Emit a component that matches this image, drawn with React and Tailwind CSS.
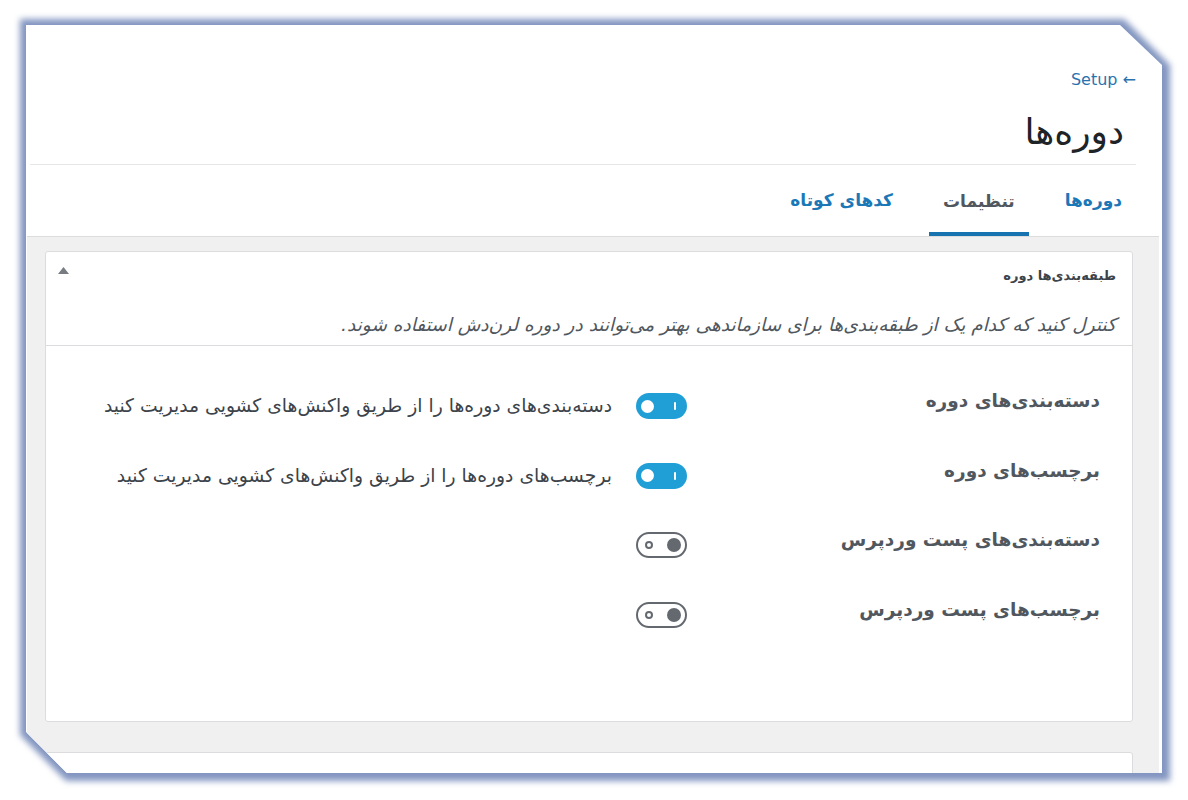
export default function App() {
  const rows = [
    {
      label: 'دسته‌بندی‌های دوره',
      on: true,
      text: 'دسته‌بندی‌های دوره‌ها را از طریق واکنش‌های کشویی مدیریت کنید',
    },
    {
      label: 'برچسب‌های دوره',
      on: true,
      text: 'برچسب‌های دوره‌ها را از طریق واکنش‌های کشویی مدیریت کنید',
    },
    { label: 'دسته‌بندی‌های پست وردپرس', on: false },
    { label: 'برچسب‌های پست وردپرس', on: false },
  ];

  return (
    <div
      dir="rtl"
      className="w-[1188px] h-[800px] bg-white pt-[25px] pl-[26px] pr-[26px] pb-[27px] overflow-hidden font-['DejaVu_Sans',sans-serif]"
    >
      {/* framed screenshot card */}
      <div className="relative h-full">
        {/* soft blue frame shadow */}
        <div className="absolute -top-[6px] -bottom-[8px] -left-[6px] -right-[8px] blur-[3px]">
          <div className="w-full h-full bg-[#8396c1] [clip-path:polygon(0_0,calc(100%-46px)_0,100%_46px,100%_100%,46px_100%,0_calc(100%-46px))]" />
        </div>
        <div className="relative h-full bg-white overflow-hidden flex flex-col [clip-path:polygon(0_0,calc(100%-42px)_0,100%_40px,100%_100%,41px_100%,0_calc(100%-41px))]">
          {/* page header */}
          <div className="ml-[4px] mr-[26px] border-b border-[#e4e6e8] pt-[44px] pb-[12px]">
            <div className="text-right leading-[22px]">
              <span dir="ltr" className="text-[16px] leading-[22px] text-[#2a72ad]">
                Setup ←
              </span>
            </div>
            <h1 className="mt-[21px] mr-[12px] text-[36px] leading-[40px] text-[#1d2327] font-normal">
              دوره‌ها
            </h1>
          </div>

          {/* tabs */}
          <div className="ml-[1px] mr-[3px] border-b border-[#dcdcde] flex pr-[23px] gap-[22px]">
            <div className="px-[14px] h-[71px] flex items-center text-[17px] font-bold text-[#1b78b7]">
              دوره‌ها
            </div>
            <div className="px-[14px] h-[71px] pt-[7px] flex items-center text-[17px] font-bold text-[#50575e] border-b-4 border-[#1772b0]">
              تنظیمات
            </div>
            <div className="px-[14px] h-[71px] flex items-center text-[17px] font-bold text-[#1b78b7]">
              کدهای کوتاه
            </div>
          </div>

          {/* gray content area */}
          <div className="flex-1 ml-[1px] mr-[3px] bg-[#f0f0f1] pt-[14px] pr-[26px] pl-[18px]">
            <div className="bg-white border border-[#dcdcde] rounded-[3px] h-[471px]">
              <div className="border-b border-[#dcdcde] pr-[16px] pl-[12px] pt-[14px] pb-[8px]">
                <div className="flex justify-between items-start">
                  <h2 className="text-[13px] leading-[20px] font-bold text-[#3c434a]">
                    طبقه‌بندی‌ها دوره
                  </h2>
                  <svg width="11" height="7" viewBox="0 0 11 7" className="mt-[1px]">
                    <path d="M5.5 0 L11 7 L0 7 Z" fill="#787c82" />
                  </svg>
                </div>
                <p className="mt-[27px] text-[18.5px] leading-[24px] italic text-[#50575e]">
                  کنترل کنید که کدام یک از طبقه‌بندی‌ها برای سازماندهی بهتر می‌توانند در دوره لرن‌دش استفاده شوند.
                </p>
              </div>

              <div className="pt-[43px] pr-[32px]">
                {rows.map((r) => (
                  <div key={r.label} className="flex items-start h-[69.5px]">
                    <div className="w-[413px] text-[18.5px] leading-[24px] font-bold text-[#50575e]">
                      {r.label}
                    </div>
                    <div className="flex items-center gap-[24px] mt-[4px]">
                      {r.on ? (
                        <div className="relative w-[51px] h-[26px] rounded-full bg-[#1f9fd6] shrink-0">
                          <span className="absolute left-[5px] top-[6.5px] w-[13px] h-[13px] rounded-full bg-white" />
                          <span className="absolute left-[38px] top-[9px] w-[2px] h-[8px] rounded-[1px] bg-white" />
                        </div>
                      ) : (
                        <div className="relative w-[51px] h-[26px] rounded-full border-2 border-[#646970] bg-white shrink-0">
                          <span className="absolute left-[29px] top-[4px] w-[14px] h-[14px] rounded-full bg-[#646970]" />
                          <span className="absolute left-[7px] top-[7px] w-[8px] h-[8px] rounded-full border-2 border-[#646970]" />
                        </div>
                      )}
                      {r.text && (
                        <span className="text-[18.75px] leading-[22px] text-[#3c434a]">{r.text}</span>
                      )}
                    </div>
                  </div>
                ))}
              </div>
            </div>

            <div className="mt-[30px] bg-white border border-[#dcdcde] rounded-t-[3px] h-[60px] pr-[16px] pt-[16px]">
              <h2 className="text-[13px] leading-[20px] font-bold text-[#3c434a]">
                تنظیمات دسترسی به محتوای دوره
              </h2>
            </div>
          </div>
        </div>
      </div>
    </div>
  );
}
